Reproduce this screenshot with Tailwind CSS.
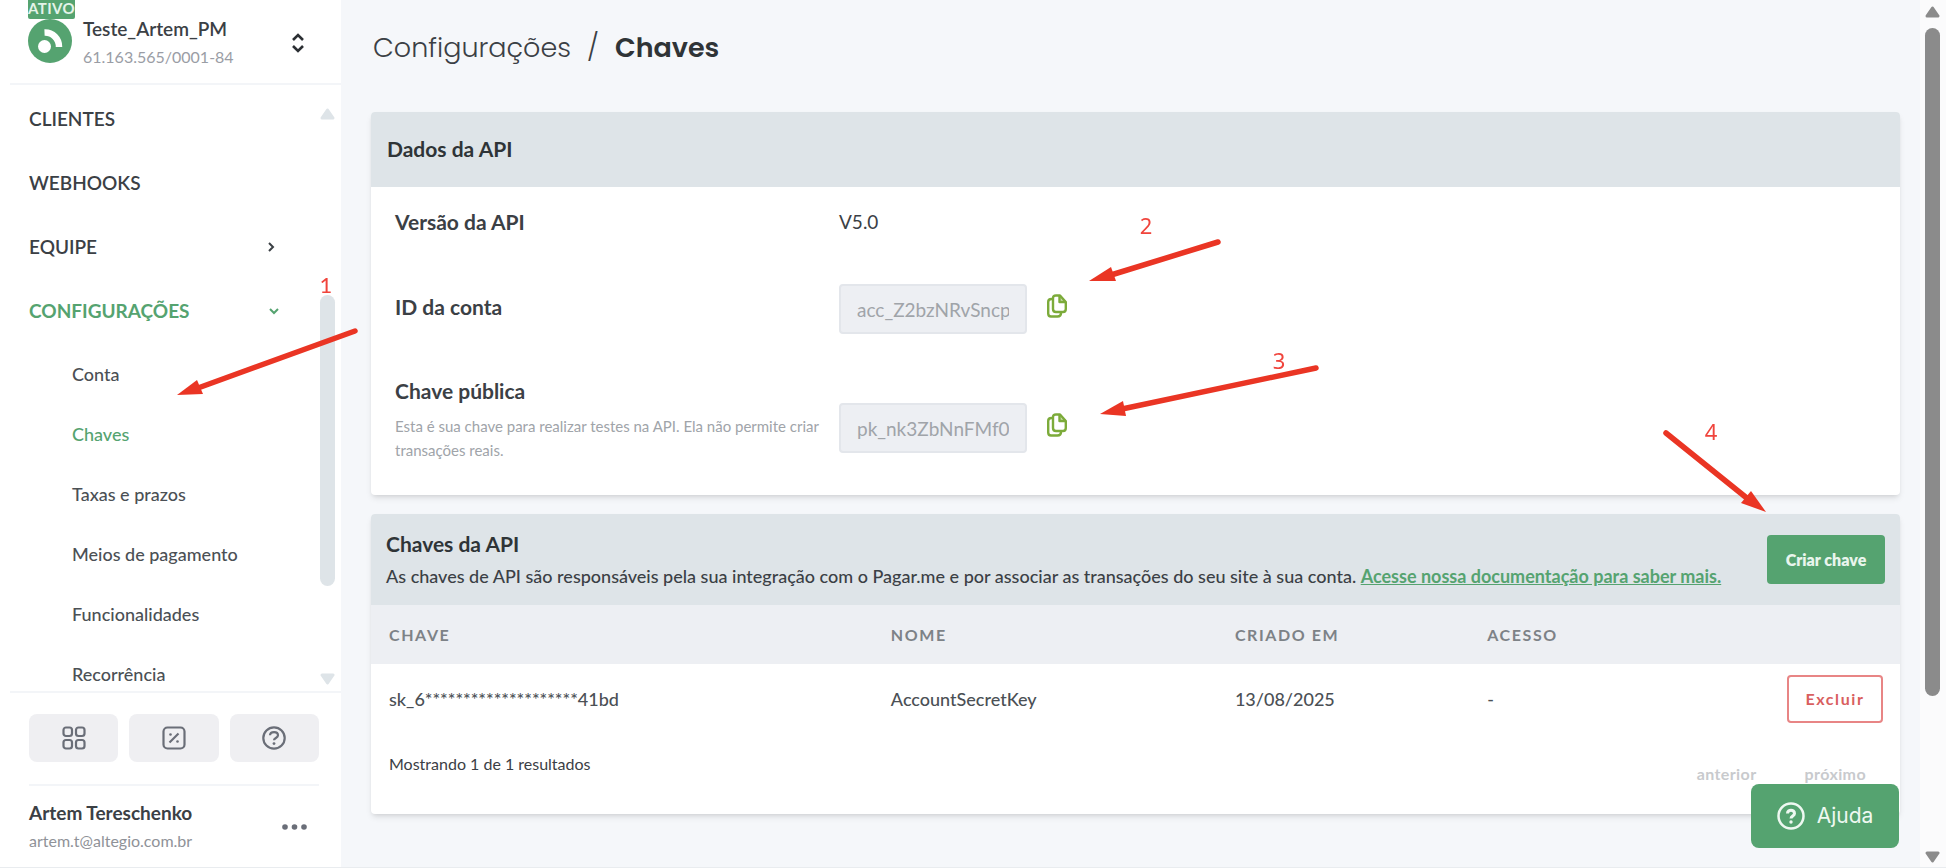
<!DOCTYPE html>
<html lang="pt-BR">
<head>
  <meta charset="UTF-8"/>
  <meta name="viewport" content="width=device-width, initial-scale=1.0"/>
  <title>Configurações / Chaves</title>
  <script src="https://cdn.jsdelivr.net/npm/@tailwindcss/browser@4"></script>
</head>
<body class="relative flex h-screen overflow-hidden bg-[#f5f7fa] font-['Lato',sans-serif] text-[#3b4045]">

  <!-- Sidebar -->
  <aside class="flex w-[341px] shrink-0 flex-col border-b border-[#e9ecef] bg-white pl-2.5">
    <div class="flex h-[85px] shrink-0 items-start border-b-2 border-[#f3f5f8] pl-[18px]">
      <div class="w-[47px]">
        <span class="block h-[19px] rounded-b-xs bg-[#55a370] text-center text-[15px] leading-4 font-bold tracking-wide text-[#e4f3e9]">ATIVO</span>
        <svg class="h-11 w-11" viewBox="0 0 44 44" fill="none">
          <circle cx="22" cy="22" r="22" fill="#55a370"/>
          <circle cx="16.5" cy="27.5" r="6.5" fill="#fff"/>
          <path d="M16.5 13.5A14 14 0 0 1 31 28" stroke="#fff" stroke-width="6.5"/>
        </svg>
      </div>
      <div class="flex-1 pt-[15px] pl-2">
        <p class="text-[19px] leading-7 font-semibold">Teste_Artem_PM</p>
        <p class="text-base leading-7 text-[#9a9da5]">61.163.565/0001-84</p>
      </div>
      <button class="mt-8 mr-[37px]" aria-label="Trocar conta">
        <svg class="h-[22px] w-3" viewBox="0 0 12 22" fill="none" stroke="#2b2f33" stroke-width="2.6"><path d="M1 8l5-5 5 5M1 14l5 5 5-5"/></svg>
      </button>
    </div>

    <nav class="relative min-h-0 flex-1 overflow-hidden pt-0.5 pl-[19px] text-[19px]">
      <a href="#" class="flex h-16 items-center font-semibold">CLIENTES</a>
      <a href="#" class="flex h-16 items-center font-semibold">WEBHOOKS</a>
      <a href="#" class="flex h-16 items-center justify-between pr-16 font-semibold">EQUIPE
        <svg class="h-3 w-3" viewBox="0 0 12 12" fill="none" stroke="currentColor" stroke-width="2"><path d="M4 2l4 4-4 4"/></svg>
      </a>
      <a href="#" class="flex h-16 items-center justify-between pr-[61px] font-bold text-[#55a370]">CONFIGURAÇÕES
        <svg class="h-3 w-3" viewBox="0 0 12 12" fill="none" stroke="currentColor" stroke-width="2"><path d="M2 4l4 4 4-4"/></svg>
      </a>
      <div class="pt-px pl-[43px] text-lg font-medium text-[#4b5055]">
        <a href="#" class="flex h-15 items-center">Conta</a>
        <a href="#" class="flex h-15 items-center text-[#55a370]">Chaves</a>
        <a href="#" class="flex h-15 items-center">Taxas e prazos</a>
        <a href="#" class="flex h-15 items-center">Meios de pagamento</a>
        <a href="#" class="flex h-15 items-center">Funcionalidades</a>
        <a href="#" class="flex h-15 items-center">Recorrência</a>
      </div>
      <!-- Menu scrollbar -->
      <div class="absolute inset-y-0 right-1.5 flex w-[15px] flex-col pt-[23px] pb-1.5">
        <svg class="h-3 w-full" viewBox="0 0 15 12"><path d="M7.5 2L13 10H2z" fill="#dee4e8" stroke="#dee4e8" stroke-width="3" stroke-linejoin="round"/></svg>
        <div class="mt-[175px] h-[291px] rounded-full bg-[#dee4e8]"></div>
        <svg class="mt-auto h-3 w-full" viewBox="0 0 15 12"><path d="M7.5 10L13 2H2z" fill="#dee4e8" stroke="#dee4e8" stroke-width="3" stroke-linejoin="round"/></svg>
      </div>
    </nav>

    <div class="shrink-0 border-t-2 border-[#f3f5f8] pt-[21px] pr-[22px] pl-[19px]">
      <div class="grid grid-cols-3 gap-[11px]">
        <button class="flex h-12 items-center justify-center rounded-lg bg-[#efeff2]" aria-label="Aplicativos">
          <svg class="h-6 w-6" viewBox="0 0 24 24" fill="none" stroke="#6a6e78" stroke-width="2.2"><rect x="1.5" y="1.5" width="8.5" height="8.5" rx="2.5"/><rect x="14" y="1.5" width="8.5" height="8.5" rx="2.5"/><rect x="1.5" y="14" width="8.5" height="8.5" rx="2.5"/><rect x="14" y="14" width="8.5" height="8.5" rx="2.5"/></svg>
        </button>
        <button class="flex h-12 items-center justify-center rounded-lg bg-[#efeff2]" aria-label="Taxas">
          <svg class="h-6 w-6" viewBox="0 0 24 24" fill="none" stroke="#6a6e78" stroke-width="2.2"><rect x="1.5" y="1.5" width="21" height="21" rx="4"/><path d="M7.5 16.5l9-9"/><circle cx="8.5" cy="8.5" r="1.3" fill="#6a6e78" stroke="none"/><circle cx="15.5" cy="15.5" r="1.3" fill="#6a6e78" stroke="none"/></svg>
        </button>
        <button class="flex h-12 items-center justify-center rounded-lg bg-[#efeff2]" aria-label="Suporte">
          <svg class="h-6 w-6" viewBox="0 0 24 24" fill="none" stroke="#6a6e78" stroke-width="2.2"><circle cx="12" cy="12" r="10.7"/><path d="M8 9.3C8.2 5 16 5 16 9.3c0 2.7-4 2.7-4 5"/><circle cx="12" cy="17.6" r="1.4" fill="#6a6e78" stroke="none"/></svg>
        </button>
      </div>
      <div class="mt-[22px] flex h-[83px] items-center justify-between border-t-2 border-[#f3f5f8] pr-3">
        <div>
          <p class="text-[19px] leading-7 font-bold">Artem Tereschenko</p>
          <p class="text-base leading-7 text-[#8f9298]">artem.t@altegio.com.br</p>
        </div>
        <button aria-label="Mais opções">
          <svg class="h-1.5 w-[25px]" viewBox="0 0 25 6" fill="#6a6e78"><circle cx="3" cy="3" r="2.8"/><circle cx="12.5" cy="3" r="2.8"/><circle cx="22" cy="3" r="2.8"/></svg>
        </button>
      </div>
    </div>
  </aside>

  <!-- Content -->
  <main class="min-w-0 flex-1 border-b border-[#e9ecef] pr-5 pl-[30px]">
    <h1 class="flex h-28 items-start gap-4 pt-7 pl-0.5 font-['Poppins','Inter',sans-serif] text-[27px] leading-10 font-light">
      <span>Configurações</span><span>/</span><span class="font-semibold text-[#2f3437]">Chaves</span>
    </h1>

    <section class="overflow-hidden rounded-sm bg-white shadow-md">
      <h2 class="flex h-[75px] items-center bg-[#dee4e8] px-4 pb-0.5 text-[21px] font-bold text-[#2f3437]">Dados da API</h2>
      <div class="px-6 pt-5 pb-[33px]">
        <div class="grid grid-cols-[444px_1fr] leading-[30px]">
          <p class="text-[21px] font-bold">Versão da API</p>
          <p class="text-[19px]">V5.0</p>
        </div>
        <div class="mt-[47px] grid grid-cols-[444px_1fr] items-start">
          <label for="conta" class="pt-2 text-[21px] leading-[30px] font-bold">ID da conta</label>
          <div class="flex items-center gap-5">
            <input id="conta" type="text" value="acc_Z2bzNRvSncpkVaYx" disabled class="h-[50px] w-[188px] rounded-sm border-2 border-[#e3e6eb] bg-[#edeff3] px-4 text-[19px] text-[#a0a4a9]"/>
            <button class="pb-1.5" aria-label="Copiar ID da conta">
              <svg class="h-6 w-5" viewBox="0 0 20 24" fill="none" stroke="#7cab3a" stroke-width="2.4" stroke-linejoin="round"><path d="M5.500 5H4.500Q1.200 5 1.200 8V19.500Q1.200 22.500 4 22.500H10.500Q14 22.500 14 19V18.500"/><path d="M9 1.500H13L18.800 8V15Q18.800 18 16 18H9Q6 18 6 15V4.500Q6 1.500 9 1.500z"/><path d="M12.500 1.500V8H18.800" fill="#7cab3a" fill-opacity=".4"/></svg>
            </button>
          </div>
        </div>
        <div class="mt-[42px] grid grid-cols-[444px_1fr]">
          <div>
            <label for="publica" class="block text-[21px] leading-[30px] font-bold">Chave pública</label>
            <p class="mt-2 text-[15px] leading-6 text-[#a0a4a9]">Esta é sua chave para realizar testes na API. Ela não permite criar transações reais.</p>
          </div>
          <div class="flex items-center gap-5 self-start pt-[27px]">
            <input id="publica" type="text" value="pk_nk3ZbNnFMf0OqWez" disabled class="h-[50px] w-[188px] rounded-sm border-2 border-[#e3e6eb] bg-[#edeff3] px-4 text-[19px] text-[#a0a4a9]"/>
            <button class="pb-1.5" aria-label="Copiar chave pública">
              <svg class="h-6 w-5" viewBox="0 0 20 24" fill="none" stroke="#7cab3a" stroke-width="2.4" stroke-linejoin="round"><path d="M5.500 5H4.500Q1.200 5 1.200 8V19.500Q1.200 22.500 4 22.500H10.500Q14 22.500 14 19V18.500"/><path d="M9 1.500H13L18.800 8V15Q18.800 18 16 18H9Q6 18 6 15V4.500Q6 1.500 9 1.500z"/><path d="M12.500 1.500V8H18.800" fill="#7cab3a" fill-opacity=".4"/></svg>
            </button>
          </div>
        </div>
      </div>
    </section>

    <section class="mt-[19px] overflow-hidden rounded-sm bg-white shadow-md">
      <div class="flex h-[91px] items-center justify-between bg-[#dee4e8] px-[15px]">
        <div class="whitespace-nowrap">
          <h2 class="text-[21px] leading-8 font-bold text-[#2f3437]">Chaves da API</h2>
          <p class="text-lg leading-8 font-medium">As chaves de API são responsáveis pela sua integração com o Pagar.me e por associar as transações do seu site à sua conta. <a href="#" class="font-bold text-[#55a370] underline">Acesse nossa documentação para saber mais.</a></p>
        </div>
        <button class="h-[49px] w-[118px] shrink-0 rounded-sm bg-[#55a370] text-base font-extrabold text-[#e9f5ed]">Criar chave</button>
      </div>
      <table class="w-full table-fixed text-left">
        <thead class="bg-[#edeff3] text-base text-[#7d8287]">
          <tr class="h-[59px]">
            <th class="w-[34%] pl-[18px] font-bold tracking-widest">CHAVE</th>
            <th class="w-[22.5%] font-bold tracking-widest">NOME</th>
            <th class="w-[16.5%] font-bold tracking-widest">CRIADO EM</th>
            <th class="font-bold tracking-widest">ACESSO</th>
            <th class="w-36"></th>
          </tr>
        </thead>
        <tbody class="text-lg font-medium text-[#4b5055]">
          <tr class="h-[70px]">
            <td class="pl-[18px]">sk_6********************41bd</td>
            <td>AccountSecretKey</td>
            <td>13/08/2025</td>
            <td>-</td>
            <td class="pr-[17px] text-right"><button class="h-12 w-24 rounded-sm border-2 border-[#e88585] text-base font-bold tracking-widest text-[#d95f5f]">Excluir</button></td>
          </tr>
        </tbody>
      </table>
      <div class="flex h-20 items-start justify-between pt-4 pr-[34px] pl-[18px]">
        <p class="text-base leading-7">Mostrando 1 de 1 resultados</p>
        <div class="flex gap-12 pt-3 text-base leading-6 font-bold tracking-wide text-[#c8cacd]">
          <button disabled>anterior</button>
          <button disabled>próximo</button>
        </div>
      </div>
    </section>
  </main>

  <!-- Page scrollbar -->
  <div class="flex w-[26px] shrink-0 flex-col border-b border-[#e9ecef] bg-[#fbfbfc] pt-1.5 pr-1.5 pb-1 pl-[5px]">
    <svg class="h-3 w-full" viewBox="0 0 15 12"><path d="M7.5 2L13 10H2z" fill="#8b8b8b" stroke="#8b8b8b" stroke-width="3" stroke-linejoin="round"/></svg>
    <div class="mt-2.5 h-[78%] rounded-full bg-[#8b8b8b]"></div>
    <svg class="mt-auto h-3 w-full" viewBox="0 0 15 12"><path d="M7.5 10L13 2H2z" fill="#8b8b8b" stroke="#8b8b8b" stroke-width="3" stroke-linejoin="round"/></svg>
  </div>

  <!-- Help -->
  <button class="fixed right-[47px] bottom-5 flex h-16 w-[148px] items-center justify-center gap-3 rounded-lg bg-[#55a370] font-['Inter',sans-serif] text-[21px] text-[#eef8f1]">
    <svg class="h-7 w-7" viewBox="0 0 28 28" fill="none" stroke="currentColor" stroke-width="2.5"><circle cx="14" cy="14" r="12.5"/><path d="M10.5 11.5C10.5 7 17.5 7 17.5 11.5C17.5 14 14 14 14 16.5" stroke-width="3"/><circle cx="14" cy="20" r="1.7" fill="currentColor" stroke="none"/></svg>
    Ajuda
  </button>

  <!-- Step markers -->
  <svg class="pointer-events-none absolute top-0 left-0 h-[868px] w-[1946px] max-w-none" viewBox="0 0 1946 868" fill="#ea3524">
    <g stroke="#ea3524" stroke-width="5.5" stroke-linecap="round">
      <path d="M355 331L198 388"/>
      <path d="M1218 242L1111 275"/>
      <path d="M1316 368L1122 409"/>
      <path d="M1666 433L1748 499"/>
    </g>
    <path d="M177 395L197 380L203 394z"/>
    <path d="M1089 281L1111 267L1116 281z"/>
    <path d="M1100 414L1123 401L1126 416z"/>
    <path d="M1766 512L1751 491L1741 503z"/>
    <g class="font-['Noto_Sans',sans-serif] text-[22px]" fill="#f0443c" text-anchor="middle">
      <text x="326" y="293" class="font-['Lato',sans-serif]">1</text>
      <text x="1146" y="234">2</text>
      <text x="1279" y="369">3</text>
      <text x="1711" y="440">4</text>
    </g>
  </svg>
</body>
</html>
